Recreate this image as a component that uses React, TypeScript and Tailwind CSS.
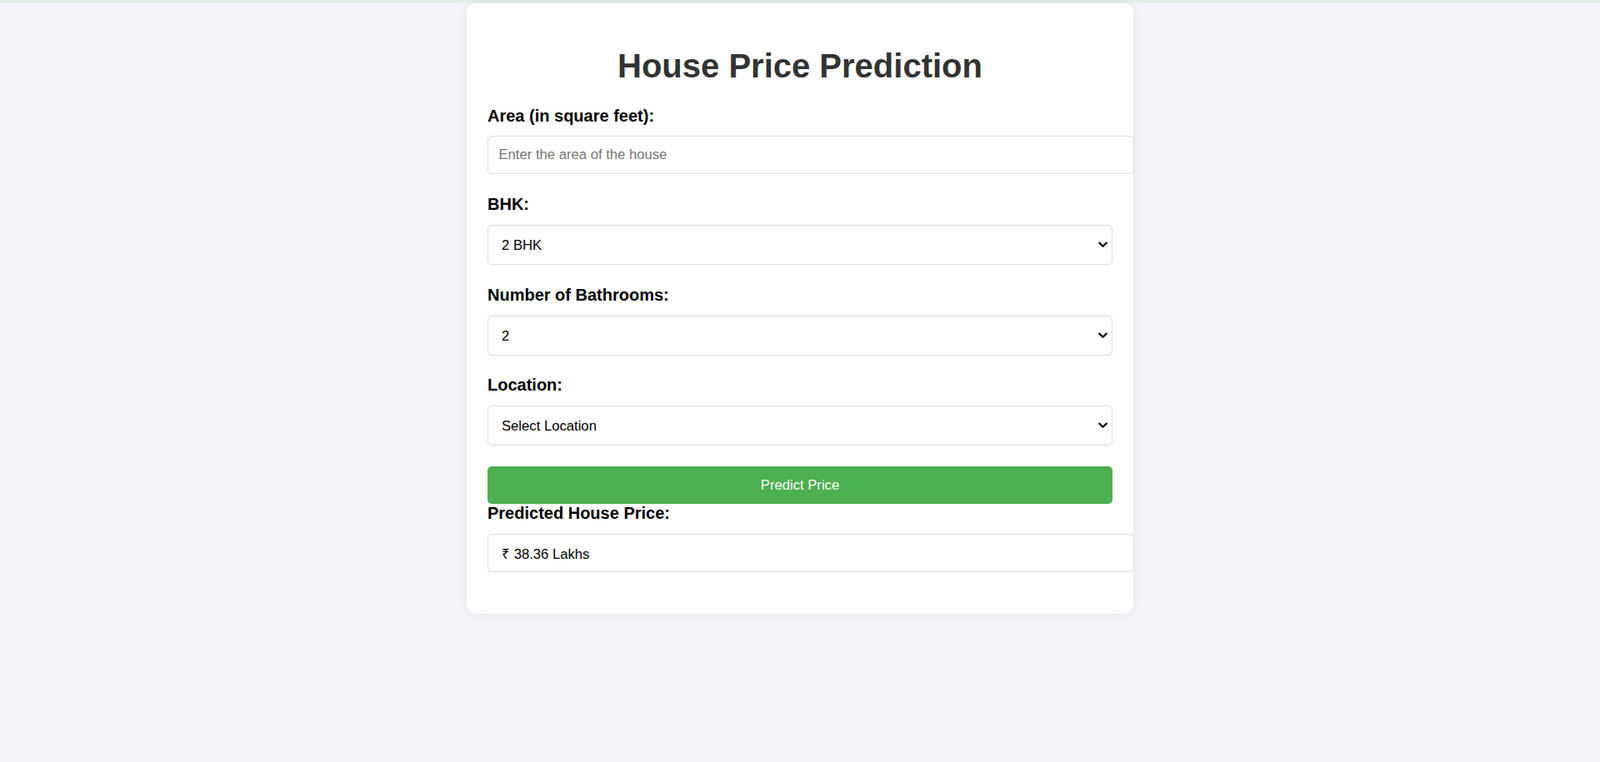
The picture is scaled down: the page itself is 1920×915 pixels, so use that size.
import React, { useState } from "react";

const bhkOptions = ["1 BHK", "2 BHK", "3 BHK", "4 BHK", "5 BHK"];
const bathOptions = ["1", "2", "3", "4", "5"];
const locations = ["Select Location", "Whitefield", "Electronic City", "Sarjapur Road", "Yelahanka"];

const labelCls = "block text-[20px] leading-[23px] font-bold text-black";

function Select({
  value,
  options,
  onChange,
  className,
}: {
  value: string;
  options: string[];
  onChange: (v: string) => void;
  className: string;
}) {
  return (
    <div className={`relative ${className}`}>
      <select
        value={value}
        onChange={(e) => onChange(e.target.value)}
        className="block w-full h-[48px] pl-[16px] pr-[30px] appearance-none border border-[#dcdcdc] rounded-[5px] bg-white text-[16.67px] text-black"
      >
        {options.map((o) => (
          <option key={o}>{o}</option>
        ))}
      </select>
      <svg
        className="pointer-events-none absolute right-[6px] top-1/2 -translate-y-1/2"
        width="11"
        height="8"
        viewBox="0 0 11 8"
        fill="none"
        stroke="black"
        strokeWidth="2.2"
        strokeLinecap="round"
        strokeLinejoin="round"
      >
        <path d="M1.3 1.6 5.5 5.8 9.7 1.6" />
      </svg>
    </div>
  );
}

export default function App() {
  const [area, setArea] = useState("");
  const [bhk, setBhk] = useState("2 BHK");
  const [bath, setBath] = useState("2");
  const [location, setLocation] = useState("Select Location");

  return (
    <div className="min-h-screen bg-[#f4f4f9] font-['Liberation_Sans',Arial,sans-serif]">
      <div className="h-[3px] bg-[#dcefe8]" />
      <div className="pt-[1px]">
        <div className="mx-auto w-[800px] bg-white rounded-[10px] shadow-[0_0_12px_rgba(0,0,0,0.08)] px-[25px] pt-[25px] pb-[26px]">
          <h1 className="mt-[27px] mb-[26px] text-center text-[40px] leading-[46px] font-bold text-[#333]">
            House Price Prediction
          </h1>

          <label className={`${labelCls} mb-[12px]`}>Area (in square feet):</label>
          <input
            type="text"
            value={area}
            onChange={(e) => setArea(e.target.value)}
            placeholder="Enter the area of the house"
            className="block w-[776px] h-[46px] px-[12.5px] mb-[25px] border border-[#dcdcdc] rounded-[5px] text-[16.67px] text-black placeholder:text-[#757575]"
          />

          <label className={`${labelCls} mb-[13px]`}>BHK:</label>
          <Select value={bhk} options={bhkOptions} onChange={setBhk} className="mb-[25px]" />

          <label className={`${labelCls} mb-[13px]`}>Number of Bathrooms:</label>
          <Select value={bath} options={bathOptions} onChange={setBath} className="mb-[24px]" />

          <label className={`${labelCls} mb-[13px]`}>Location:</label>
          <Select value={location} options={locations} onChange={setLocation} className="mb-[25px]" />

          <button className="block w-full h-[45px] rounded-[5px] bg-[#4caf50] text-white text-[16.67px]">
            Predict Price
          </button>

          <label className={`${labelCls} mb-[13px]`}>Predicted House Price:</label>
          <input
            type="text"
            readOnly
            value="₹ 38.36 Lakhs"
            className="block w-[776px] h-[46px] pl-[16px] pr-[12.5px] mb-[24px] border border-[#dcdcdc] rounded-[5px] text-[16.67px] text-black"
          />
        </div>
      </div>
    </div>
  );
}
